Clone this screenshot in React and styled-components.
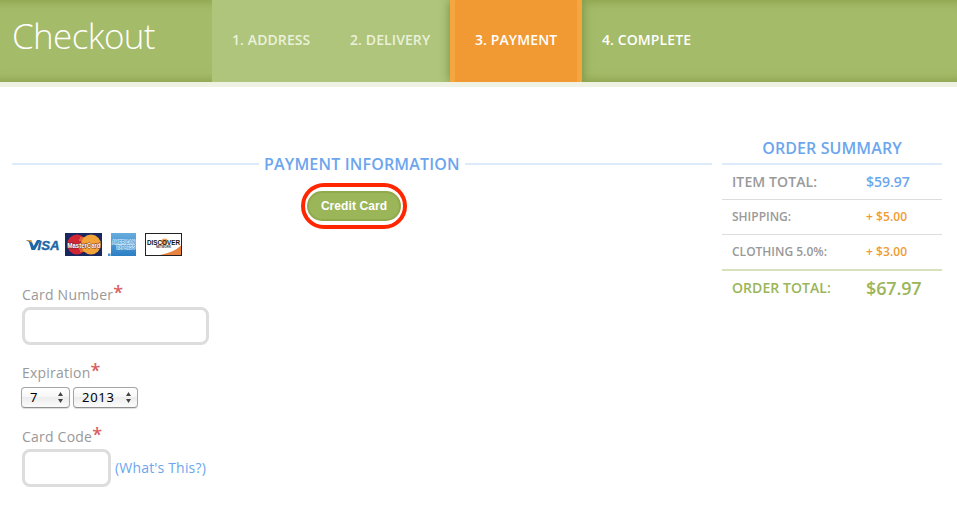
import React from 'react';
import styled, { createGlobalStyle, css } from 'styled-components';

const GlobalStyle = createGlobalStyle`
  * { box-sizing: border-box; }
  body {
    margin: 0;
    background: #fff;
    color: #999;
    font-family: 'Open Sans', 'Noto Sans', sans-serif;
    overflow: hidden;
  }
`;

const Header = styled.header`
  display: flex;
  height: 87px;
  background: #a4bb69;
  border-bottom: 5px solid #eff2e3;
  box-shadow: inset 0 12px 10px -10px #8ba04b, inset 0 -12px 10px -10px #8ba04b;
`;

const Title = styled.h1`
  width: 212px;
  margin: 0;
  padding: 9px 0 0 12px;
  font-size: 35px;
  line-height: 54px;
  font-weight: 300;
  letter-spacing: -0.65px;
  color: #fff;
`;

const Steps = styled.nav`
  display: flex;
`;

const Step = styled.a`
  width: ${(p) => p.$width}px;
  padding: 0 20px;
  font-size: 14px;
  line-height: 80px;
  font-weight: 600;
  white-space: nowrap;
  letter-spacing: 0.1px;
  color: #fff;
  ${(p) => p.$state === 'done' && css`
    background: #afc57b;
    color: #eaf1da;
  `}
  ${(p) => p.$state === 'current' && css`
    position: relative;
    background: #f19a33;
    border: solid #f4a741;
    border-width: 0 5px;
    box-shadow: 0 0 10px #73883f;
    clip-path: inset(0 -14px);
  `}
`;

const Main = styled.main`
  display: flex;
  gap: 10px;
  padding: 48px 15px 0 12px;
`;

const Payment = styled.section`
  width: 700px;
`;

const PaymentHeading = styled.h2`
  display: flex;
  align-items: center;
  gap: 5px;
  height: 24px;
  margin: 17px 0 0;
  font-size: 16px;
  font-weight: 600;
  line-height: 24px;
  white-space: nowrap;
  color: #6ca6ee;
  &::before, &::after {
    content: '';
    flex: 1;
    height: 2px;
    background: #ddebfa;
  }
`;

const HeadingText = styled.span`
  width: 196px;
  letter-spacing: 0.18px;
`;

const MethodRing = styled.div`
  width: 106px;
  height: 46px;
  margin: 7px 0 0 289px;
  padding: 4px 2px;
  border: 4px solid #ff2600;
  border-radius: 23px;
`;

const MethodButton = styled.button`
  display: block;
  width: 94px;
  height: 30px;
  padding: 0;
  border: 2px solid #8fa94c;
  border-radius: 15px;
  background: #9bb559;
  color: #fff;
  font: bold 12px 'Liberation Sans', Arial, sans-serif;
  letter-spacing: 0.08px;
`;

const Cards = styled.div`
  display: flex;
  height: 24px;
  margin: 4px 0 0 14px;
`;

const Field = styled.div`
  margin: ${(p) => p.$top}px 0 0 10px;
`;

const Label = styled.label`
  display: flex;
  height: 24px;
  font-size: 14px;
  line-height: 24px;
  letter-spacing: 0.22px;
  white-space: nowrap;
`;

const Required = styled.span`
  color: #d9605f;
  font-size: 18px;
  line-height: 18px;
  font-weight: 600;
  letter-spacing: 0;
`;

const Row = styled.div`
  display: flex;
  align-items: center;
  gap: ${(p) => p.$gap || 0}px;
`;

const Input = styled.input`
  width: ${(p) => p.$width}px;
  height: 38px;
  border: 3px solid #ddd;
  border-radius: 8px;
  background: #fff;
  outline: none;
`;

const SelectBox = styled.button`
  display: flex;
  align-items: center;
  justify-content: space-between;
  width: ${(p) => p.$width}px;
  height: 21px;
  padding: 0 6px 0 8px;
  border: 1px solid #a5a5a5;
  border-bottom-color: #8f8f8f;
  border-radius: 4px;
  background: linear-gradient(#fff, #f6f6f6 48%, #ededed 50%, #fbfbfb);
  box-shadow: 0 1px 1px #ddd;
  font: 13px/19px 'Noto Sans', 'Open Sans', sans-serif;
  letter-spacing: 0.7px;
  color: #000;
`;

const SelectValue = styled.span`
  height: 19px;
`;

const SelectRow = styled(Row)`
  margin: 2px 0 0 -1px;
`;

const Help = styled.a`
  font-size: 14px;
  line-height: 20px;
  letter-spacing: 0.18px;
  color: #6ca6ee;
`;

const Summary = styled.aside`
  width: 220px;
`;

const SummaryHeading = styled.h2`
  height: 30px;
  margin: 0;
  border-bottom: 2px solid #ddebfa;
  font-size: 16px;
  line-height: 26px;
  font-weight: 600;
  letter-spacing: 0.1px;
  text-align: center;
  color: #6ca6ee;
`;

const SummaryRow = styled.div`
  display: grid;
  grid-template-columns: 134px 1fr;
  align-items: center;
  height: ${(p) => p.$height}px;
  padding: 0 0 ${(p) => p.$lift || 0}px 10px;
  border-bottom: ${(p) => p.$rule || '0'};
  font-size: ${(p) => p.$size}px;
  font-weight: 600;
  white-space: nowrap;
  color: ${(p) => p.$color || '#999'};
`;

const Amount = styled.span`
  color: ${(p) => p.$color};
  font-size: ${(p) => p.$size || 'inherit'};
  line-height: 20px;
  letter-spacing: ${(p) => p.$spacing || 0}px;
`;

const LabelText = styled.span`
  line-height: ${(p) => p.$line || 20}px;
  letter-spacing: ${(p) => p.$spacing || 0}px;
`;

const CardArt = styled.svg`
  display: block;
  overflow: visible;
  font-family: 'Liberation Sans', Arial, sans-serif;
`;

function CardLogos() {
  return (
    <CardArt width="158" height="24" viewBox="0 0 158 24">
      <defs>
        <linearGradient id="amex" x1="0" y1="0" x2="0" y2="1">
          <stop offset="0" stopColor="#68acdd" />
          <stop offset="1" stopColor="#2b7fc4" />
        </linearGradient>
      </defs>
      <path d="M0 7h5l2.7 6L11 7h3.5L9 17H5.5L3 9Z" fill="#1d67a6" />
      <path d="M0 7h4q2 0 2.5 3Q4 8 0 7Z" fill="#f5a02e" />
      <text x="11.5" y="17" fontSize="13.6" fontWeight="bold" fontStyle="italic" fill="#1d67a6" stroke="#1d67a6" strokeWidth="0.4" textLength="22" lengthAdjust="spacingAndGlyphs">ISA</text>
      <rect x="39" width="37" height="23" fill="#17275f" />
      <circle cx="51" cy="11.5" r="10" fill="#cf2535" />
      <circle cx="65" cy="11.5" r="10" fill="#f2a337" />
      <path d="M54 5h6M53 7h5M53 16h5M54 18h6" stroke="#f2a337" strokeWidth="1" />
      <text x="41.5" y="14.5" fontSize="7.6" fontWeight="bold" fill="#fff" stroke="#5a2026" strokeWidth="0.8" paintOrder="stroke" textLength="33" lengthAdjust="spacingAndGlyphs">MasterCard</text>
      <rect x="85" width="25" height="23" fill="url(#amex)" />
      <rect x="82" y="20.5" width="2.5" height="2.5" fill="#4292cf" />
      <text x="86" y="11" fontSize="5.5" fontWeight="bold" fill="#4c98d2" stroke="#e1f2fd" strokeWidth="1.1" paintOrder="stroke" textLength="23" lengthAdjust="spacingAndGlyphs">AMERICAN</text>
      <text x="90.5" y="16" fontSize="5.5" fontWeight="bold" fill="#4c98d2" stroke="#e1f2fd" strokeWidth="1.1" paintOrder="stroke" textLength="18.5" lengthAdjust="spacingAndGlyphs">EXPRESS</text>
      <rect x="119.5" y="0.5" width="36" height="22" fill="#fff" stroke="#222" />
      <path d="M134 22Q148 19.5 155 12.5V22Z" fill="#e8823f" />
      <circle cx="138.6" cy="8.8" r="3.2" fill="#f2a15c" />
      <text x="121" y="11.5" fontSize="7.4" fontWeight="bold" fill="#111" textLength="33" lengthAdjust="spacingAndGlyphs">DISCOVER</text>
      <text x="130" y="15.3" fontSize="3.2" fontWeight="bold" fill="#333" textLength="15" lengthAdjust="spacingAndGlyphs">NETWORK</text>
    </CardArt>
  );
}

function Arrows() {
  return (
    <svg width="5" height="11" viewBox="0 0 5 11">
      <path d="M0 4h5L2.5 0ZM0 7h5L2.5 11Z" fill="#444" />
    </svg>
  );
}

export default function App() {
  return (
    <>
      <GlobalStyle />
      <Header>
        <Title>Checkout</Title>
        <Steps>
          <Step $state="done" $width={118}>1. ADDRESS</Step>
          <Step $state="done" $width={120}>2. DELIVERY</Step>
          <Step $state="current" $width={132}>3. PAYMENT</Step>
          <Step $width={130}>4. COMPLETE</Step>
        </Steps>
      </Header>
      <Main>
        <Payment>
          <PaymentHeading><HeadingText>PAYMENT INFORMATION</HeadingText></PaymentHeading>
          <MethodRing><MethodButton type="button">Credit Card</MethodButton></MethodRing>
          <Cards><CardLogos /></Cards>
          <Field $top={26}>
            <Label>Card Number<Required>*</Required></Label>
            <Input $width={187} aria-label="Card Number" />
          </Field>
          <Field $top={16}>
            <Label>Expiration<Required>*</Required></Label>
            <SelectRow $gap={3}>
              <SelectBox type="button" $width={49}><SelectValue>7</SelectValue><Arrows /></SelectBox>
              <SelectBox type="button" $width={65}><SelectValue>2013</SelectValue><Arrows /></SelectBox>
            </SelectRow>
          </Field>
          <Field $top={17}>
            <Label>Card Code<Required>*</Required></Label>
            <Row $gap={4}>
              <Input $width={89} aria-label="Card Code" />
              <Help>(What's This?)</Help>
            </Row>
          </Field>
        </Payment>
        <Summary>
          <SummaryHeading>ORDER SUMMARY</SummaryHeading>
          <SummaryRow $height={35} $size={14} $rule="1px solid #ddd">
            <LabelText $spacing={0.1}>ITEM TOTAL:</LabelText><Amount $color="#6ca6ee">$59.97</Amount>
          </SummaryRow>
          <SummaryRow $height={35} $size={12} $lift={1} $rule="1px solid #ddd">
            <LabelText>SHIPPING:</LabelText><Amount $color="#f19a33" $spacing={0.05}>+ $5.00</Amount>
          </SummaryRow>
          <SummaryRow $height={36} $size={12} $lift={1} $rule="2px solid #d7e1bd">
            <LabelText>CLOTHING 5.0%:</LabelText><Amount $color="#f19a33" $spacing={0.05}>+ $3.00</Amount>
          </SummaryRow>
          <SummaryRow $height={36} $size={14} $lift={2} $color="#9bb559">
            <LabelText $line={22} $spacing={0.06}>ORDER TOTAL:</LabelText><Amount $color="#9bb559" $size="18px" $spacing={-0.15}>$67.97</Amount>
          </SummaryRow>
        </Summary>
      </Main>
    </>
  );
}
